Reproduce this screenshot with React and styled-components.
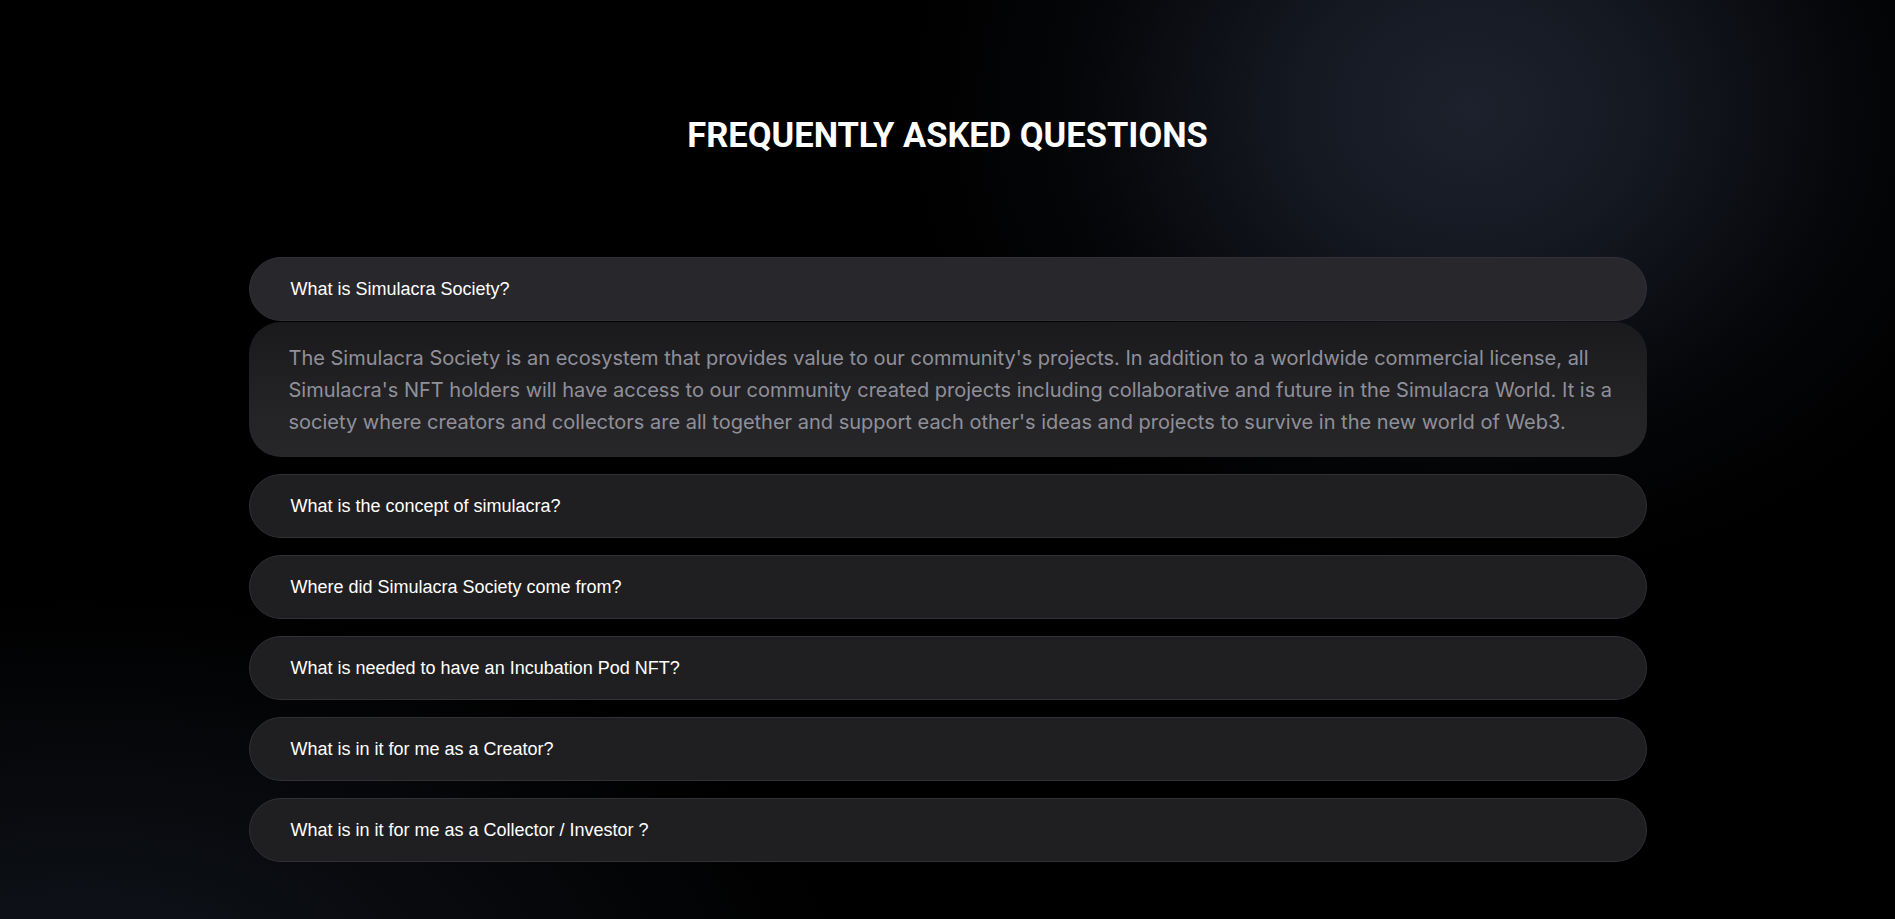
import React, { useState } from "react";
import styled, { createGlobalStyle } from "styled-components";

const GlobalStyle = createGlobalStyle`
  html, body { margin: 0; padding: 0; background: #000; }
  * { box-sizing: border-box; }
`;

const Page = styled.div`
  min-height: 919px;
  width: 100%;
  overflow: hidden;
  background:
    radial-gradient(ellipse 560px 470px at 1470px 110px, rgba(28, 33, 45, 1) 0%, rgba(23, 27, 37, 0.92) 30%, rgba(10, 12, 17, 0.5) 70%, rgba(0, 0, 0, 0) 100%),
    radial-gradient(ellipse 760px 380px at 80px 980px, rgba(18, 22, 30, 0.9) 0%, rgba(0, 0, 0, 0) 100%),
    #000;
`;

const Wrapper = styled.div`
  width: 1398px;
  margin: 0 auto;
  padding-top: 115px;
`;

const Title = styled.h2`
  margin: 0 0 102px;
  text-align: center;
  font-family: Roboto, "Liberation Sans", sans-serif;
  font-weight: 700;
  font-size: 34.5px;
  line-height: 40px;
  color: #fff;
`;

const List = styled.div`
  display: flex;
  flex-direction: column;
  gap: 17px;
`;

const Item = styled.div`
  display: flex;
  flex-direction: column;
  gap: 1px;
`;

const Question = styled.button`
  display: flex;
  align-items: center;
  width: 100%;
  height: 64px;
  padding: 0 40px 0 41px;
  border: 1px solid #303035;
  border-radius: 32px;
  background: ${(p) => (p.$open ? "#27272c" : "#1f1f22")};
  color: #fff;
  font-family: "Liberation Sans", Arial, sans-serif;
  font-size: 18px;
  text-align: left;
  cursor: pointer;
`;

const Answer = styled.div`
  padding: 20px 28px 19px 40px;
  border-radius: 32px;
  background: linear-gradient(180deg, #1a1a1d 0%, #232326 60%, #27272a 100%);
  color: #90909a;
  font-family: Inter, "Noto Sans", sans-serif;
  font-size: 20px;
  line-height: 32px;
`;

const faqs = [
  {
    q: "What is Simulacra Society?",
    a: "The Simulacra Society is an ecosystem that provides value to our community's projects. In addition to a worldwide commercial license, all Simulacra's NFT holders will have access to our community created projects including collaborative and future in the Simulacra World. It is a society where creators and collectors are all together and support each other's ideas and projects to survive in the new world of Web3.",
  },
  { q: "What is the concept of simulacra?", a: "" },
  { q: "Where did Simulacra Society come from?", a: "" },
  { q: "What is needed to have an Incubation Pod NFT?", a: "" },
  { q: "What is in it for me as a Creator?", a: "" },
  { q: "What is in it for me as a Collector / Investor ?", a: "" },
];

export default function App() {
  const [open, setOpen] = useState(0);
  return (
    <Page>
      <GlobalStyle />
      <Wrapper>
        <Title>FREQUENTLY ASKED QUESTIONS</Title>
        <List>
          {faqs.map((f, i) => (
            <Item key={i}>
              <Question $open={open === i} onClick={() => setOpen(open === i ? -1 : i)}>
                {f.q}
              </Question>
              {open === i && f.a && <Answer>{f.a}</Answer>}
            </Item>
          ))}
        </List>
      </Wrapper>
    </Page>
  );
}
